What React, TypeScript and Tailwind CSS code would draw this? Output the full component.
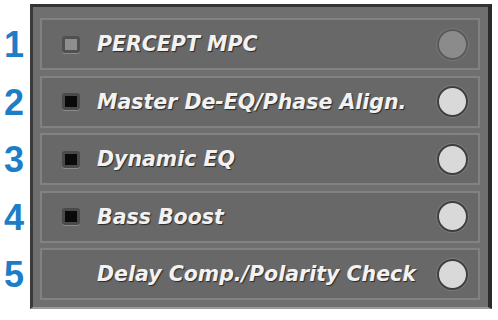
const rows = [
  { label: "PERCEPT MPC", led: "dim", on: false },
  { label: "Master De-EQ/Phase Align.", led: "black", on: true },
  { label: "Dynamic EQ", led: "black", on: true },
  { label: "Bass Boost", led: "black", on: true },
  { label: "Delay Comp./Polarity Check", led: "none", on: true },
];

export default function App() {
  return (
    <div className="w-[498px] h-[320px] bg-white flex flex-row pt-[4px] overflow-hidden">
      {/* Numbers */}
      <div className="w-[30px] flex flex-col gap-[5.5px] pt-[15px]">
        {rows.map((_, i) => (
          <div
            key={i}
            className="h-[52px] flex items-center justify-start pl-[4px] text-[36px] font-bold text-[#1b7ec6] leading-none"
            style={{ fontFamily: '"Liberation Sans", Arial, sans-serif' }}
          >
            {i + 1}
          </div>
        ))}
      </div>

      {/* Panel */}
      <div className="w-[462px] h-[305px] bg-[#6f6f6f] border-l-[3px] border-t-[3px] border-r-[4px] border-b-[2px] border-l-[#3a3a3a] border-t-[#333333] border-r-[#2a2a2a] border-b-[#9c9c9c] pt-[11px] pl-[7px] pr-[4px] flex flex-col gap-[5.5px]">
        {rows.map((r) => (
          <div
            key={r.label}
            className="h-[52px] w-[440px] bg-[#686868] border-2 border-[#828282] flex flex-row items-center"
          >
            <div className="w-[55px] flex justify-center pl-[2px]">
              {r.led === "dim" && (
                <div className="w-[18px] h-[17px] rounded-[3px] bg-[#8e8e8e] border-[3px] border-[#505050] shadow-[0_1px_0_#8a8a8a]" />
              )}
              {r.led === "black" && (
                <div className="w-[18px] h-[17px] rounded-[3px] bg-[#0a0a0a] border-[3px] border-[#4a4a4a] shadow-[0_1px_0_#8a8a8a]" />
              )}
            </div>
            <div
              className="flex-1 text-[20.5px] font-bold italic text-[#f2f2f2] whitespace-nowrap pt-[1px] [text-shadow:1px_1px_1px_#2a2a2a]"
              style={{ fontFamily: '"DejaVu Sans", Verdana, sans-serif' }}
            >
              {r.label}
            </div>
            <div className="mr-[10px]">
              {r.on ? (
                <div className="w-[31px] h-[31px] rounded-full bg-[#d9d9d9] border-2 border-[#3f3f3f] shadow-[0_0_0_1px_#7a7a7a]" />
              ) : (
                <div className="w-[31px] h-[31px] rounded-full bg-[#8b8b8b] border-2 border-[#5a5a5a] shadow-[0_0_0_1px_#777777]" />
              )}
            </div>
          </div>
        ))}
      </div>
    </div>
  );
}
